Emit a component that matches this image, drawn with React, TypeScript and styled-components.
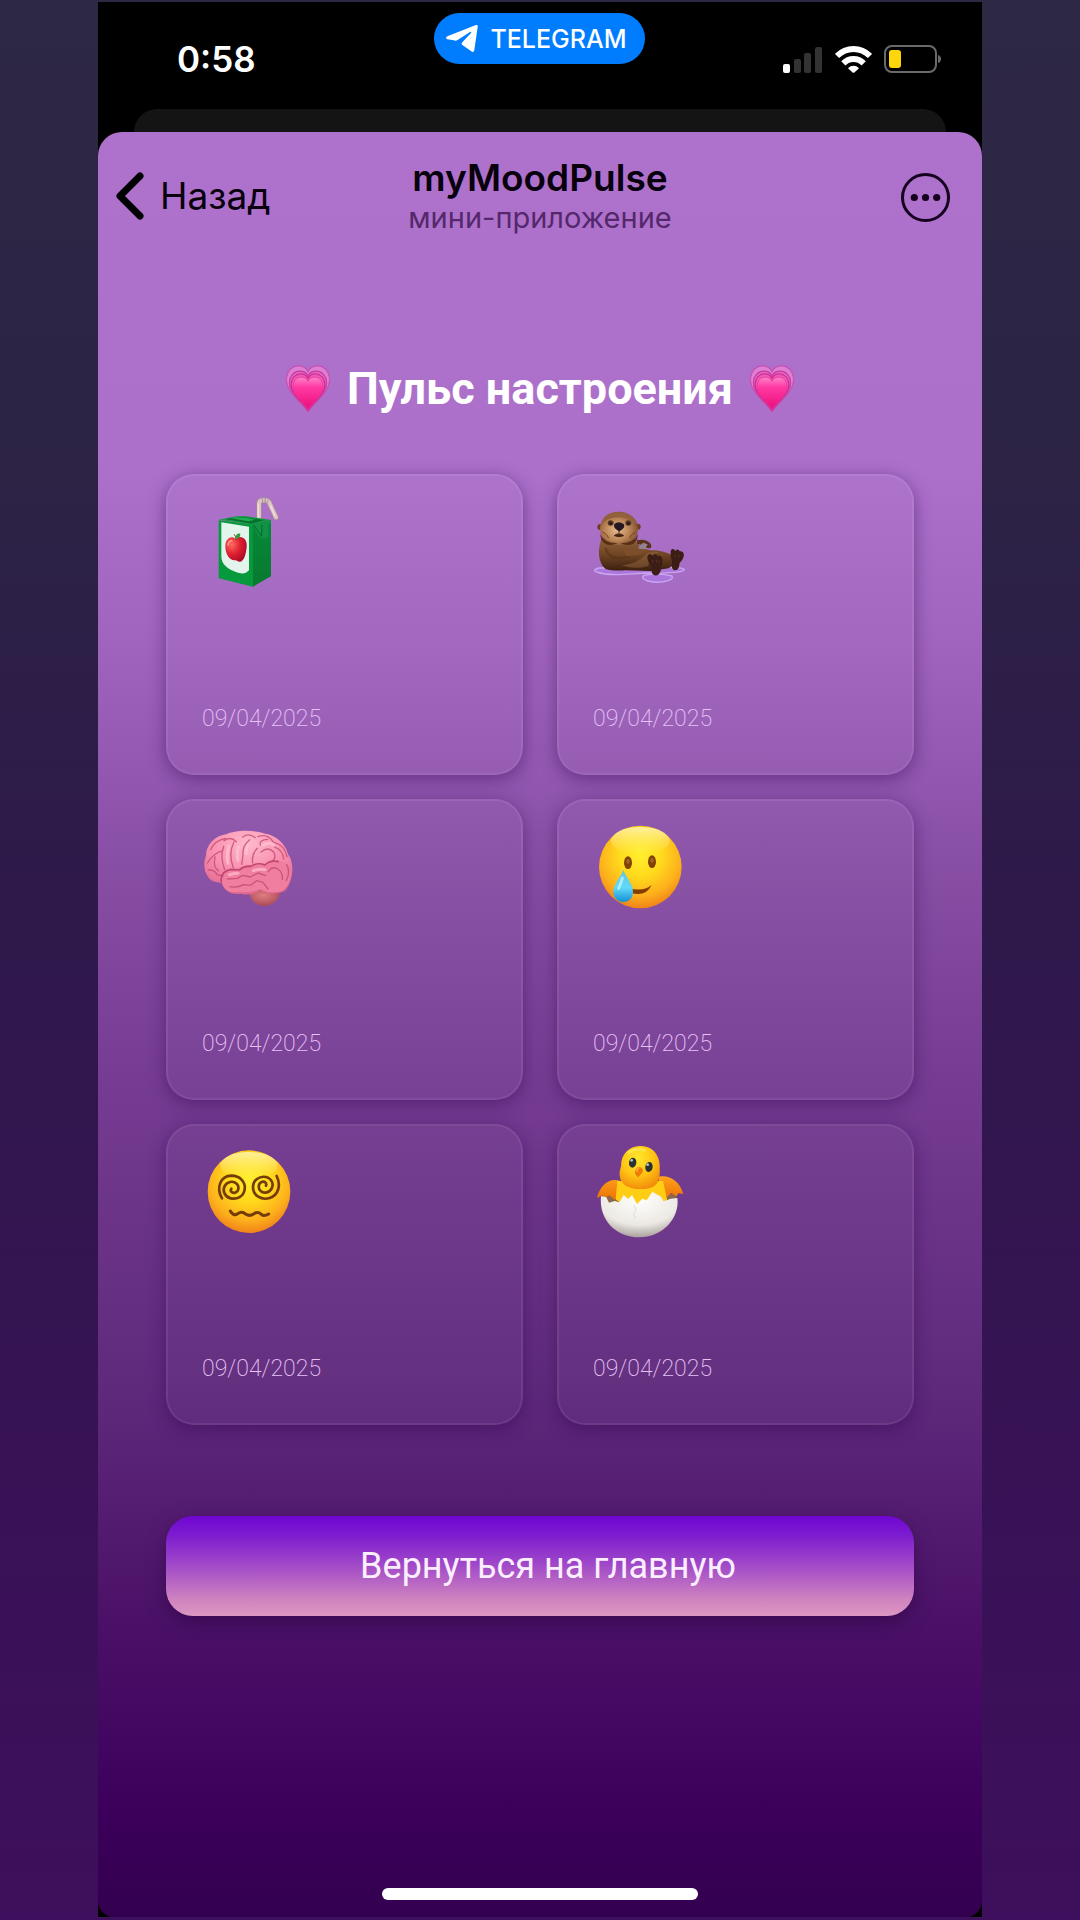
import React from 'react';
import styled, { createGlobalStyle } from 'styled-components';

const GlobalStyle = createGlobalStyle`
  *, *::before, *::after { box-sizing: border-box; }
  html { background: #3d1059; }
  body { margin: 0; }
  button { font: inherit; color: inherit; border: 0; background: none; padding: 0; cursor: pointer; }
  svg { display: block; }
`;

const Page = styled.div`
  min-height: 100vh;
  padding: 2px 0 3px;
  display: flex;
  justify-content: center;
  font-family: Inter, 'Noto Sans', sans-serif;
  background: linear-gradient(180deg, #2d2844 0%, #2c2345 25%, #2e1a4a 45%, #33154f 62%, #3a1159 85%, #3e0f5c 100%);
`;

const Phone = styled.div`
  width: 100%;
  max-width: 884px;
  display: flex;
  flex-direction: column;
  background: #000;
`;

const StatusBar = styled.header`
  display: grid;
  grid-template-columns: 1fr auto 1fr;
  align-items: start;
  min-height: 107px;
  padding: 11px 40px 0 79px;
  color: #fff;
`;

const Clock = styled.time`
  margin-top: 24px;
  font-size: 35px;
  line-height: 44px;
  font-weight: 600;
`;

const AppPill = styled.div`
  display: flex;
  align-items: center;
  gap: 12px;
  height: 51px;
  margin-right: 40px;
  padding: 0 18px 0 12px;
  border-radius: 26px;
  background: #007dff;
  font-size: 25px;
  line-height: 30px;
  font-weight: 500;
`;

const Indicators = styled.div`
  display: flex;
  justify-content: flex-end;
  align-items: center;
  gap: 12px;
  margin-top: 32px;
`;

const SheetBehind = styled.div`
  height: 23px;
  margin: 0 36px;
  border-radius: 23px 23px 0 0;
  background: #141414;
`;

const Sheet = styled.div`
  flex: 1;
  display: flex;
  flex-direction: column;
  border-radius: 24px 24px 16px 16px;
  background: linear-gradient(
    180deg,
    #ae72cc 0%,
    #ac70cb 19%,
    #a165bf 28%,
    #9257b0 36%,
    #864da3 42%,
    #763c93 53%,
    #5f2a7c 70%,
    #4a1067 84%,
    #3c005b 94%,
    #33004f 100%
  );
`;

const NavBar = styled.nav`
  display: grid;
  grid-template-columns: 1fr auto 1fr;
  align-items: center;
  height: 108px;
  padding: 0 18px;
  color: #08000c;
`;

const BackButton = styled.button`
  justify-self: start;
  display: flex;
  align-items: center;
  gap: 16px;
  margin-top: 20px;
  font-size: 37px;
  line-height: 44px;
`;

const MoreButton = styled.button`
  justify-self: end;
  margin: 22px 14px 0 0;
`;

const AppTitle = styled.div`
  margin-top: 20px;
  text-align: center;
`;

const AppName = styled.div`
  font-size: 37px;
  line-height: 44px;
  font-weight: 600;
`;

const AppKind = styled.div`
  font-size: 29px;
  line-height: 36px;
  color: #54286b;
`;

const Main = styled.main`
  flex: 1;
  display: flex;
  flex-direction: column;
  padding: 122px 68px 17px;
  font-family: Roboto, 'Noto Sans', sans-serif;
  color: #fff;
`;

const Heading = styled.h1`
  display: flex;
  align-items: center;
  justify-content: center;
  gap: 16px;
  margin: 0 0 58px;
  font-size: 45px;
  line-height: 54px;
  font-weight: 700;
`;

const CardGrid = styled.ul`
  display: grid;
  grid-template-columns: 1fr 1fr;
  gap: 24px 34px;
  margin: 0 0 91px;
  padding: 0;
  list-style: none;
`;

const Card = styled.li`
  display: flex;
  flex-direction: column;
  justify-content: space-between;
  min-height: 301px;
  padding: 20px 34px 40px;
  border: 2px solid rgba(255, 255, 255, 0.07);
  border-radius: 28px;
  background: rgba(255, 255, 255, 0.03);
  box-shadow: 0 4px 18px rgba(50, 0, 80, 0.45);
`;

const CardDate = styled.time`
  font-size: 23px;
  line-height: 28px;
  font-weight: 200;
  color: #e6c2f6;
`;

const HomeButton = styled.button`
  height: 100px;
  padding-left: 16px;
  border-radius: 27px;
  background: linear-gradient(180deg, #6f06d2 0%, #7b1bcf 18%, #a24bc8 50%, #d084bf 84%, #dc97c2 100%);
  box-shadow: 0 6px 18px rgba(40, 0, 60, 0.5);
  font-size: 36px;
  line-height: 44px;
  color: #fbeeff;
`;

const HomeIndicator = styled.div`
  width: 316px;
  height: 12px;
  margin: auto auto 0;
  border-radius: 6px;
  background: #fff;
`;

const Plane = () => (
  <svg width="32" height="27" viewBox="0 0 96 81" fill="#fff" aria-hidden="true">
    <path d="M90 0c4-1 6 1 5 6L85 75c-1 6-5 7-9 4L50 61c-4-3-4-6-1-9l26-28c2-3 0-5-3-3L36 44c-4 3-8 4-13 2L4 43c-5-2-5-6 0-9z" />
  </svg>
);

const Signal = () => (
  <svg width="40" height="27" viewBox="0 0 40 27" aria-hidden="true">
    <rect x="0" y="18" width="7" height="9" rx="2" fill="#fff" />
    <rect x="11" y="13" width="7" height="14" rx="2" fill="#333" />
    <rect x="21" y="7" width="7" height="20" rx="2" fill="#333" />
    <rect x="32" y="1" width="7" height="26" rx="2" fill="#333" />
  </svg>
);

const Wifi = () => (
  <svg width="37" height="27" viewBox="0 0 111 81" aria-hidden="true">
    <g fill="none" stroke="#fff" strokeWidth="18">
      <path d="M6 30C34 2 77 2 105 30" />
      <path d="M25 52C42 35 69 35 86 52" />
    </g>
    <path d="M39 67c9-10 24-10 33 0L59 79q-4 3-7 0z" fill="#fff" />
  </svg>
);

const Battery = () => (
  <svg width="58" height="28" viewBox="0 0 58 28" aria-hidden="true">
    <rect x="1" y="1" width="51" height="26" rx="7" fill="none" stroke="#6a6a6a" strokeWidth="2" />
    <rect x="5" y="5" width="12" height="18" rx="3" fill="#ffd60a" />
    <path d="M54 10c4 1 4 7 0 8z" fill="#6a6a6a" />
  </svg>
);

const Chevron = () => (
  <svg width="28" height="48" viewBox="0 0 28 48" aria-hidden="true">
    <path d="M24 4 4 24l20 20" fill="none" stroke="#000" strokeWidth="7" strokeLinecap="round" strokeLinejoin="round" />
  </svg>
);

const MoreIcon = () => (
  <svg width="49" height="49" viewBox="0 0 49 49" aria-hidden="true">
    <circle cx="24.500" cy="24.500" r="23" fill="none" stroke="#16001f" strokeWidth="3" />
    <g fill="#16001f">
      <circle cx="13.300" cy="24.500" r="3.600" />
      <circle cx="24.500" cy="24.500" r="3.600" />
      <circle cx="35.700" cy="24.500" r="3.600" />
    </g>
  </svg>
);

const heartPath = 'M50 98C38 78 6 58 6 32 6 14 18 4 31 4c9 0 16 5 19 12C53 9 60 4 69 4c13 0 25 10 25 28 0 26-32 46-44 66z';

const Heart = ({ id }: { id: string }) => (
  <svg width="46" height="48" viewBox="4 2 92 98" role="img" aria-label="Растущее сердце">
    <defs>
      <linearGradient id={id} x1="0" y1="0" x2="0" y2="1">
        <stop offset="0" stopColor="#ff86ca" />
        <stop offset=".3" stopColor="#ff3ba4" />
        <stop offset="1" stopColor="#ec0c7c" />
      </linearGradient>
    </defs>
    <path d={heartPath} fill="#dd80d4" stroke="#c94fb4" strokeWidth="2.500" />
    <path d={heartPath} transform="translate(7 11) scale(.86)" fill="#e067c4" stroke="#cb3aa0" strokeWidth="3" />
    <path d={heartPath} transform="translate(11 17) scale(.78)" fill="#ee58b6" stroke="#d02e92" strokeWidth="3" />
    <path d={heartPath} transform="translate(15 24) scale(.7)" fill={`url(#${id})`} stroke="#e82f95" strokeWidth="2" />
  </svg>
);

const Juice = () => (
  <svg width="92" height="92" viewBox="-9 18 276 276" role="img" aria-label="Сок">
    <defs>
      <linearGradient id="side" x1="0" y1="0" x2="0" y2="1">
        <stop offset="0" stopColor="#07883a" />
        <stop offset="1" stopColor="#087a2e" />
      </linearGradient>
      <radialGradient id="apple" cx=".3" cy=".3" r=".8">
        <stop offset="0" stopColor="#ff6a62" />
        <stop offset=".5" stopColor="#dd2030" />
        <stop offset="1" stopColor="#a80a22" />
      </radialGradient>
    </defs>
    <path d="M162 92V40q1-8 9-9h12q6 0 9 5l21 46" fill="none" stroke="#a98a94" strokeWidth="17" strokeLinejoin="round" strokeLinecap="round" />
    <path d="M162 92V40q1-8 9-9h12q6 0 9 5l21 46" fill="none" stroke="#dcc3c6" strokeWidth="12" strokeLinejoin="round" strokeLinecap="round" />
    <path d="M160 88V42M196 46l14 32" fill="none" stroke="#f1dfdf" strokeWidth="4" strokeLinecap="round" />
    <path d="M171 25l2 12M181 24l-1 12M191 29l-6 9" stroke="#a98a94" strokeWidth="3" />
    <path d="M41 89 96 79q20-3 38 1l64 10-54 13z" fill="#129b43" />
    <path d="M62 87q38-12 90 0l26 3-38 11z" fill="#06712d" />
    <path d="M72 84q35-6 78 5l-20 5z" fill="#22ad55" />
    <path d="M41 91l103 12v187L41 265z" fill="#079a3c" />
    <path d="M143 103l55-13v169l-54 31z" fill="url(#side)" />
    <path d="M143 103l55-13v10l-8 2v38l-14 6-14-4z" fill="#129246" />
    <path d="M146 105l24 34 1-34" fill="none" stroke="#056a2c" strokeWidth="3" />
    <path d="M49 97l83 13v131q-11 14-33 7-50-15-50-49z" fill="#e3f4ed" />
    <path d="M92 147c13-13 36-4 33 24-2 22-8 42-19 44-7 2-9-4-15-4-19 2-31-24-30-44 1-23 20-31 31-20z" fill="url(#apple)" />
    <path d="M93 150q0-10-5-17" stroke="#6b5530" strokeWidth="3" fill="none" />
    <path d="M92 147c-1-14 7-18 14-16 0 10-5 15-14 16z" fill="#319b38" />
    <path d="M69 165q2-12 11-13" stroke="#ff938b" strokeWidth="5" strokeLinecap="round" fill="none" />
  </svg>
);

const Otter = () => (
  <svg width="92" height="92" viewBox="39 18 276 276" role="img" aria-label="Выдра">
    <defs>
      <linearGradient id="fur" x1="0" y1="0" x2="0" y2="1">
        <stop offset="0" stopColor="#8d6038" />
        <stop offset=".5" stopColor="#6f4524" />
        <stop offset="1" stopColor="#3b1e0f" />
      </linearGradient>
      <radialGradient id="face" cx=".45" cy=".55" r=".6">
        <stop offset="0" stopColor="#e9bd90" />
        <stop offset=".55" stopColor="#b98355" />
        <stop offset="1" stopColor="#75482a" />
      </radialGradient>
    </defs>
    <g fill="#ad76dc" stroke="#c9a6ef" strokeWidth="4">
      <path d="M58 234q-24 6-8 12 30 10 80 7l70-4q40 2 66-1 44-2 47-9-4-6-30-6z" />
      <path d="M192 256q-12 10 12 17 32 8 60-1 18-6 12-14-34-10-84-2z" />
    </g>
    <path d="M65 145C53 175 52 218 77 237q20 6 59 4l76 2 55-8q18-12 16-37-34-18-72-17-35-7-49-35z" fill="url(#fur)" />
    <path d="M125 226q44-1 80-39l32-1q-24 14-33 42-39 12-79-2z" fill="#946540" opacity=".5" />
    <path d="M77 173q7 36 54 30 37-8 54-33" fill="none" stroke="#512a12" strokeWidth="7" opacity=".45" />
    <path d="M171 151q26-6 41 10 5 11-2 14-12 0-17-8-12-6-22-4z" fill="#5a3219" />
    <path d="M175 172l14-14 14 5-8 15-17 3z" fill="#93838f" />
    <path d="M130 177q30-9 50 0 17-1 20 7-20 13-62 15z" fill="#7c4e29" />
    <circle cx="61" cy="111" r="9" fill="#6a3d20" />
    <circle cx="173" cy="110" r="9" fill="#6a3d20" />
    <path d="M60 116C60 84 86 65 116 65s59 20 58 53c-1 29-27 46-58 46s-56-18-56-48z" fill="url(#face)" />
    <path d="M66 102C67 77 91 66 116 66s50 14 53 38q-18-22-52-22-35-1-51 20z" fill="#91623d" />
    <path d="M60 132q15 29 54 27-34 16-50-9zM174 132q-15 29-54 27 36 16 51-9z" fill="#51290f" opacity=".85" />
    <ellipse cx="92" cy="99" rx="9" ry="8" fill="#5c3a26" />
    <ellipse cx="145" cy="99" rx="9" ry="8" fill="#5c3a26" />
    <circle cx="92" cy="100" r="5" fill="#281b23" />
    <circle cx="145" cy="100" r="5" fill="#281b23" />
    <path d="M103 102q13-11 28 0 5 9-4 16-9 11-19 0-8-6-5-16z" fill="#251722" />
    <path d="M117 121v12m-14 4q7-7 14-4 7-3 14 4-14 6-28 0z" fill="#482312" stroke="#482312" strokeWidth="3" />
    <path d="M68 126q14 6 18 18M166 126q-12 6-17 18" stroke="#75451f" strokeWidth="3" fill="none" />
    <path d="M203 209c-4-18 9-20 15-12 5-8 13-6 15 1 9-4 16 4 14 16 0 12-5 18-5 30q-7 15-18 12-12-4-9-26-9-8-12-21z" fill="#3b1d15" />
    <path d="M272 190c-1-15 8-16 14-7 4-8 12-5 13 1 10-3 14 7 12 16q-4 12-12 19l-3 15q-6 9-14 6-10-4-6-26-5-11-4-24z" fill="#3b1d15" />
    <path d="M218 210v8m11-9v8m9-5l-2 8m48-26l2 8m11-8l-2 8" stroke="#5a3222" strokeWidth="3" />
  </svg>
);

const Brain = () => (
  <svg width="92" height="92" viewBox="36 33 276 276" role="img" aria-label="Мозг">
    <defs>
      <radialGradient id="pink" cx=".5" cy=".2" r=".85">
        <stop offset="0" stopColor="#ffb9cc" />
        <stop offset=".5" stopColor="#f990b0" />
        <stop offset="1" stopColor="#dc6189" />
      </radialGradient>
      <radialGradient id="stem" cx=".45" cy=".35" r=".7">
        <stop offset="0" stopColor="#df7d82" />
        <stop offset="1" stopColor="#a64653" />
      </radialGradient>
    </defs>
    <path d="M154 243q20 16 55 13l20-10-39-16z" fill="#8b2d50" />
    <path d="M179 246q35-9 92-6-2 38-41 48-30 2-45-20-8-11-6-22z" fill="url(#stem)" />
    <path d="M48 138C47 108 72 78 108 73c26-14 88-14 118-2 30 4 61 30 68 61 20 26 17 80-8 110-24 14-52 8-76-2-17 16-43 15-59 11-27 5-52-10-54-33-18 1-36-4-44-19-13-18-12-46-5-61z" fill="url(#pink)" />
    <path d="M95 218q-4-30 24-38 28-5 51-16 24 3 53-2 18-14 38-12 40 8 41 41 0 34-25 52-33 11-69-6-36 14-59 8-43 8-54-27z" fill="#f07f9f" />
    <g fill="none" stroke="#c0466f" strokeLinecap="round" strokeLinejoin="round">
      <path d="M94 215q-4-31 29-37l26 2q10-12 33-11 20-13 43-4 17-17 39-10" strokeWidth="5" />
      <g strokeWidth="4" opacity=".75">
        <path d="M52 159q20-31 47-37M75 141q-7 31 11 42M101 109q-12 32 3 70M132 96q-18 35-2 77M179 89q-23 19-20 46l-4 28" />
        <path d="M62 119q9-26 44-34M102 92q20-14 37 3M158 81q18-14 38 2M204 80q28-11 45 15M252 97q32 8 39 43" />
        <path d="M211 105q-4-16 22-17M213 126q21-18 38 0 10 18-6 30M202 115q-18 18-14 44M254 111q25 10 27 36" />
        <path d="M113 207l29-2 16-9 23 5 23-12 23 8M120 230q20 5 41-6l21 2 18-14 19 5 15 20" />
        <path d="M235 185q10-18 28-8 16 9 14 31M290 164q12 21-1 48M55 180q20-1 26 14l18 4" />
      </g>
    </g>
    <path d="M116 108q-8 31-2 51M145 112q-5 22-1 39M173 106q-5 11-5 25M219 105q17-10 33 0M118 194q18-4 26-4M190 182q19-7 35-3" fill="none" stroke="#ffcad9" strokeWidth="9" strokeLinecap="round" opacity=".6" />
  </svg>
);

const FaceGradient = ({ id }: { id: string }) => (
  <defs>
    <radialGradient id={id} cx=".5" cy=".35" r=".67">
      <stop offset="0" stopColor="#fff02e" />
      <stop offset=".4" stopColor="#ffd91c" />
      <stop offset=".74" stopColor="#fdb01c" />
      <stop offset="1" stopColor="#ee7d18" />
    </radialGradient>
    <linearGradient id={`${id}-shine`} x1="0" y1="0" x2="0" y2="1">
      <stop offset="0" stopColor="#fff6b5" stopOpacity=".85" />
      <stop offset="1" stopColor="#fff47a" stopOpacity="0" />
    </linearGradient>
  </defs>
);

const TearSmile = () => (
  <svg width="92" height="92" viewBox="24 33 276 276" role="img" aria-label="Улыбка со слезой">
    <FaceGradient id="smile" />
    <defs>
      <linearGradient id="tear" x1="0" y1="0" x2="0" y2="1">
        <stop offset="0" stopColor="#63c5df" />
        <stop offset=".55" stopColor="#60d9f7" />
        <stop offset="1" stopColor="#128fd4" />
      </linearGradient>
    </defs>
    <circle cx="166" cy="171" r="124" fill="url(#smile)" />
    <ellipse cx="166" cy="93" rx="88" ry="42" fill="url(#smile-shine)" />
    <ellipse cx="129" cy="158" rx="12" ry="19" fill="#804300" />
    <ellipse cx="201" cy="155" rx="12" ry="19" fill="#804300" />
    <ellipse cx="129" cy="154" rx="5" ry="8" fill="#a26324" />
    <ellipse cx="201" cy="151" rx="5" ry="8" fill="#a26324" />
    <path d="M130 234q44 13 70-9-13 28-43 27-18-2-27-10z" fill="#853d00" />
    <path d="M115 180c8 22 29 42 29 66 0 20-13 30-29 30s-30-11-30-30c0-24 22-44 30-66z" fill="url(#tear)" />
    <path d="M112 204q-5 19-11 31" stroke="#c5f7ff" strokeWidth="9" strokeLinecap="round" opacity=".7" />
  </svg>
);

const Dizzy = () => (
  <svg width="92" height="92" viewBox="36 33 276 276" role="img" aria-label="Лицо со спиральными глазами">
    <FaceGradient id="dizzy" />
    <circle cx="177" cy="170" r="124" fill="url(#dizzy)" />
    <ellipse cx="177" cy="91" rx="86" ry="40" fill="url(#dizzy-shine)" />
    <g fill="none" stroke="#753c08" strokeWidth="8" strokeLinecap="round">
      <path d="M96 190C77 157 92 123 124 122c27 0 43 20 40 41-3 22-23 31-42 27-18-4-25-23-18-37 7-13 25-17 36-7 9 9 6 24-5 27-9 2-16-5-11-12" />
      <path d="M260 123c14 29 5 57-21 66-26 8-49-8-50-31-1-23 20-36 39-32 17 4 24 21 17 34-6 13-23 17-33 8-9-8-7-23 3-27 9-3 16 3 13 11" />
      <path d="M121 228q9 17 22 8 13-9 25 2 11 7 24-2 11-8 22 2 7 7 22-1" strokeWidth="9" />
    </g>
  </svg>
);

const Chick = () => (
  <svg width="92" height="92" viewBox="24 33 276 276" role="img" aria-label="Вылупившийся цыплёнок">
    <defs>
      <radialGradient id="chick" cx=".45" cy=".28" r=".75">
        <stop offset="0" stopColor="#ffe72b" />
        <stop offset=".55" stopColor="#ffc414" />
        <stop offset="1" stopColor="#f18a0a" />
      </radialGradient>
      <radialGradient id="shell" cx=".5" cy=".2" r=".8">
        <stop offset="0" stopColor="#fffefa" />
        <stop offset=".65" stopColor="#ece9e4" />
        <stop offset="1" stopColor="#aaa19d" />
      </radialGradient>
      <linearGradient id="wing" x1="0" y1="0" x2="0" y2="1">
        <stop offset="0" stopColor="#ffa31c" />
        <stop offset="1" stopColor="#ec7104" />
      </linearGradient>
    </defs>
    <path d="M51 181l227-4-12 29-196 1z" fill="#8b684b" />
    <path d="M108 139C75 124 44 151 36 189l16-8 6 9 16-9 14 13 24-22zM222 125c33-6 65 17 73 53l-14-4-7 10-15-10-13 12-24-18z" fill="url(#wing)" />
    <path d="M97 138h137l13 60q-38 28-79 24-45 1-76-29z" fill="#ffcd14" />
    <path d="M108 94C108 56 133 34 164 33c36-1 59 23 60 58 1 40 1 66-46 71-46 3-73-13-74-42-1-9 2-18 4-26z" fill="url(#chick)" />
    <path d="M48 183l16 4 8 16 17-5 14 4 13-22 14 12 11-12 15 27 16-16 13 5 17-26 26 15 8 14 21-8 20-2c8 60-44 118-115 118-69 0-121-52-114-124z" fill="url(#shell)" />
    <path d="M147 208l6 16-7 13 5 11" fill="none" stroke="#d3cec9" strokeWidth="2" />
    <ellipse cx="143" cy="83" rx="11" ry="15" fill="#283331" transform="rotate(8 143 83)" />
    <ellipse cx="192" cy="96" rx="11" ry="15" fill="#283331" transform="rotate(8 192 96)" />
    <circle cx="140" cy="76" r="4" fill="#b9cbc6" />
    <circle cx="188" cy="89" r="4" fill="#b9cbc6" />
    <path d="M163 95q14 5 10 17l-13 15q-12-7-10-18 3-12 13-14z" fill="#ed7d06" />
    <path d="M163 97q-8 5-8 13" stroke="#ffad3e" strokeWidth="5" fill="none" />
    <path d="M132 53q19-16 47-7" stroke="#fff16c" strokeWidth="8" strokeLinecap="round" opacity=".6" fill="none" />
  </svg>
);

const entries = [
  { id: 'juice', Icon: Juice },
  { id: 'otter', Icon: Otter },
  { id: 'brain', Icon: Brain },
  { id: 'tear', Icon: TearSmile },
  { id: 'dizzy', Icon: Dizzy },
  { id: 'chick', Icon: Chick },
];

export default function App() {
  return (
    <>
      <GlobalStyle />
      <Page>
        <Phone>
          <StatusBar>
            <Clock>0:58</Clock>
            <AppPill>
              <Plane />
              TELEGRAM
            </AppPill>
            <Indicators>
              <Signal />
              <Wifi />
              <Battery />
            </Indicators>
          </StatusBar>
          <SheetBehind />
          <Sheet>
            <NavBar>
              <BackButton type="button">
                <Chevron />
                Назад
              </BackButton>
              <AppTitle>
                <AppName>myMoodPulse</AppName>
                <AppKind>мини-приложение</AppKind>
              </AppTitle>
              <MoreButton type="button" aria-label="Ещё">
                <MoreIcon />
              </MoreButton>
            </NavBar>
            <Main>
              <Heading>
                <Heart id="heart-left" />
                Пульс настроения
                <Heart id="heart-right" />
              </Heading>
              <CardGrid>
                {entries.map(({ id, Icon }) => (
                  <Card key={id}>
                    <Icon />
                    <CardDate dateTime="2025-04-09">09/04/2025</CardDate>
                  </Card>
                ))}
              </CardGrid>
              <HomeButton type="button">Вернуться на главную</HomeButton>
              <HomeIndicator />
            </Main>
          </Sheet>
        </Phone>
      </Page>
    </>
  );
}
